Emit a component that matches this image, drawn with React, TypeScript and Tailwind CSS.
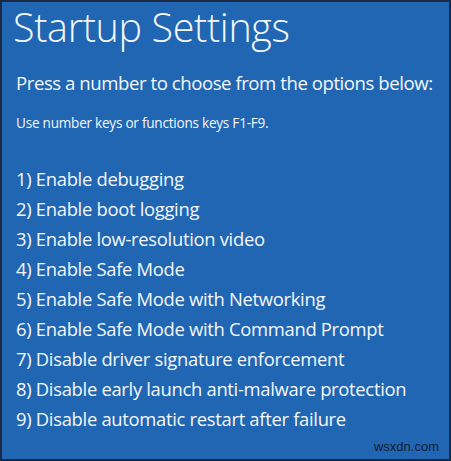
import React from "react";

const options = [
  "1) Enable debugging",
  "2) Enable boot logging",
  "3) Enable low-resolution video",
  "4) Enable Safe Mode",
  "5) Enable Safe Mode with Networking",
  "6) Enable Safe Mode with Command Prompt",
  "7) Disable driver signature enforcement",
  "8) Disable early launch anti-malware protection",
  "9) Disable automatic restart after failure",
];

export default function App() {
  return (
    <div className="w-[451px] h-[461px] bg-[#1a2a44] p-[2px]">
      <div
        className="relative w-full h-full bg-[#2066b2] text-[#f4f7fb] pl-[13px] flex flex-col"
        style={{ fontFamily: '"Open Sans", "Noto Sans", sans-serif' }}
      >
        <h1 className="text-[39.5px] leading-[46px] mt-[2px] -ml-[2px] font-light tracking-[-0.35px]">
          Startup Settings
        </h1>
        <p className="text-[18.6px] leading-[26px] mt-[20px] pl-[1px] tracking-[-0.45px]">
          Press a number to choose from the options below:
        </p>
        <p className="text-[13.6px] leading-[18px] mt-[18px] pl-[1px] tracking-[-0.25px]">
          Use number keys or functions keys F1-F9.
        </p>
        <ul className="mt-[32px] pl-[1px] flex flex-col">
          {options.map((o) => (
            <li key={o} className="text-[18.4px] leading-[30px] tracking-[-0.3px]">
              {o}
            </li>
          ))}
        </ul>
        <span
          className="absolute right-[10px] bottom-[3px] text-[13px] text-[#131c2e]"
          style={{ fontFamily: '"Liberation Sans", Arial, sans-serif' }}
        >
          wsxdn.com
        </span>
      </div>
    </div>
  );
}
